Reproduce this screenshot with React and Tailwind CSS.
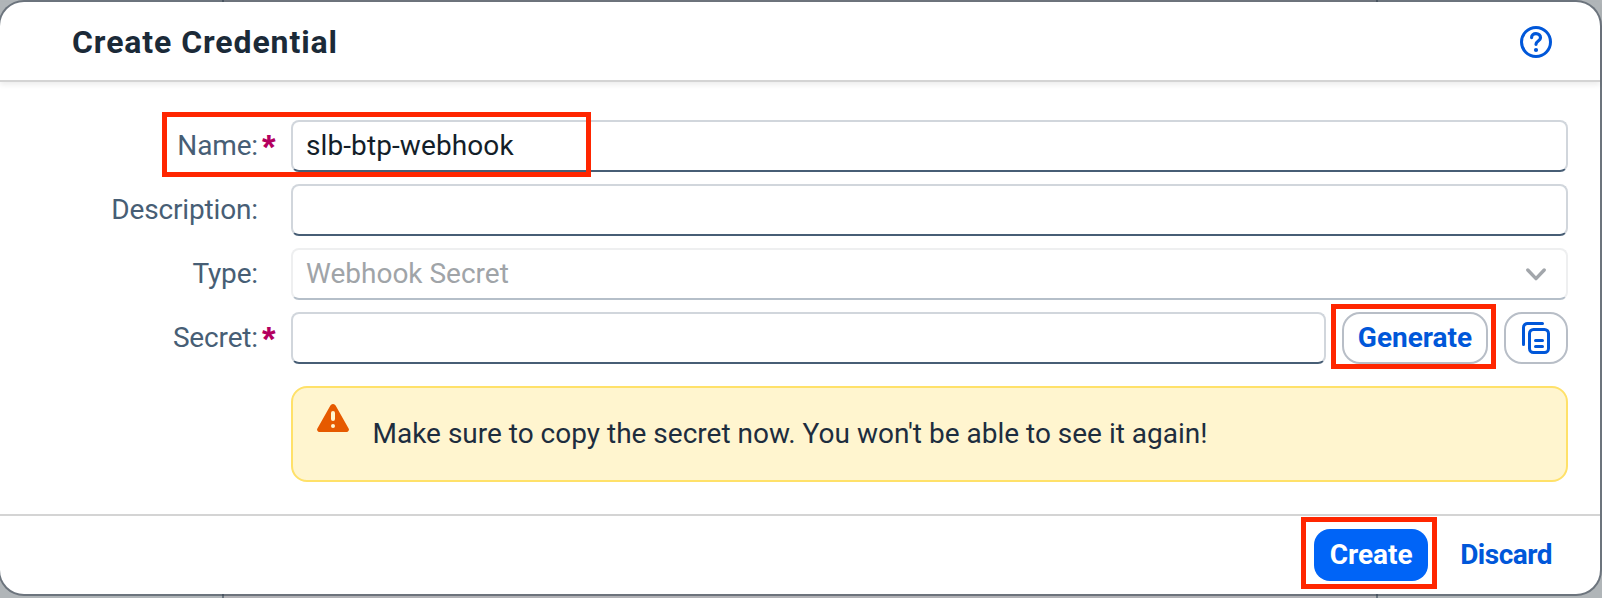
function HelpIcon() {
  return (
    <svg className="h-8 w-8" viewBox="0 0 32 32" fill="none" stroke="#0057d9" strokeLinecap="round" strokeLinejoin="round">
      <circle cx="16" cy="16" r="14.5" strokeWidth="3" />
      <path d="M11.6 11.6C11.6 9 13.5 7.6 16 7.6s4.5 1.6 4.5 4.1c0 3.4-4.5 3.2-4.5 6.6" strokeWidth="3.2" />
      <circle cx="16" cy="24" r="2.1" fill="#0057d9" stroke="none" />
    </svg>
  );
}

function CopyIcon() {
  return (
    <svg className="h-8 w-7" viewBox="0 0 28 32" fill="none" stroke="#0057d9" strokeWidth="3" strokeLinecap="round" strokeLinejoin="round">
      <path d="M1.5 22.5V5.5a4 4 0 0 1 4-4h15" />
      <rect x="7.5" y="7.5" width="19" height="23" rx="4" />
      <path d="M13.5 18.5h7M13.5 24.5h7" />
    </svg>
  );
}

function ChevronIcon() {
  return (
    <svg className="h-[13px] w-5" viewBox="0 0 20 13" fill="none" stroke="#a2a6ab" strokeWidth="3.4" strokeLinecap="round" strokeLinejoin="round">
      <path d="M1.8 2 10 10.6 18.2 2" />
    </svg>
  );
}

function WarningIcon() {
  return (
    <svg className="h-7 w-8" viewBox="0 0 32 28">
      <path d="M13.4 1.5a3 3 0 0 1 5.2 0l13 22.9A2.4 2.4 0 0 1 29.5 28h-27A2.4 2.4 0 0 1 .4 24.4z" fill="#e65a00" />
      <rect x="14" y="7" width="4" height="10" rx="2" fill="#fff5cf" />
      <circle cx="16" cy="22" r="2" fill="#fff5cf" />
    </svg>
  );
}

function Row({ label, required, children }) {
  return (
    <div className="flex h-[52px] items-center">
      <div className="w-[258px] shrink-0 text-right tracking-[-0.15px] text-[#475e75]">{label}:</div>
      <div className="h-[52px] w-[33px] shrink-0 pt-[5px] pl-1 font-['Liberation_Sans',sans-serif] text-[35px] leading-[44px] font-bold text-[#b4005f]">
        {required ? "*" : ""}
      </div>
      {children}
    </div>
  );
}

function Field({ value, disabled, children }) {
  return (
    <div
      className={
        "flex h-[52px] min-w-0 flex-1 items-center justify-between rounded-lg border-2 bg-white px-[13px] " +
        (disabled
          ? "border-[#eeeff0] border-b-[#b5bfc9] text-[#a0a4a8]"
          : "border-[#d1d6dc] border-b-[#475e75] tracking-[0.1px] text-[#131e29]")
      }
    >
      <span>{value}</span>
      {children}
    </div>
  );
}

export default function App() {
  return (
    <div className="relative h-[598px] w-[1602px] overflow-hidden bg-[#b0b5b8] pt-0.5 font-[Roboto,sans-serif] text-[28px] leading-9">
      <div className="absolute inset-0 flex">
        <div className="w-56 border-r-2 border-[#6c7680]" />
        <div className="w-[1154px] border-r-2 border-[#6c7680] bg-[#b2b2b6]" />
      </div>

      <div className="relative flex h-[592px] w-[1600px] flex-col rounded-3xl bg-white shadow-[0_0_0_2px_rgba(40,52,66,0.5)]">
        <header className="flex h-20 shrink-0 items-center justify-between border-b-2 border-[#d4d4d4] pt-[2px] pr-12 pl-[72px] shadow-[0_3px_5px_rgba(0,0,0,0.07)]">
          <h1 className="text-[32px] font-bold tracking-[0.9px] text-[#1b2a38]">Create Credential</h1>
          <HelpIcon />
        </header>

        <main className="flex flex-1 flex-col gap-3 pt-[38px] pr-8">
          <Row label="Name" required>
            <Field value="slb-btp-webhook" />
          </Row>
          <Row label="Description">
            <Field />
          </Row>
          <Row label="Type">
            <Field value="Webhook Secret" disabled>
              <span className="mr-[7px]">
                <ChevronIcon />
              </span>
            </Field>
          </Row>
          <Row label="Secret" required>
            <Field />
            <button className="ml-4 h-[52px] w-[146px] rounded-[18px] border-2 border-[#b8bec7] bg-white font-bold text-[#0057d9]">
              Generate
            </button>
            <button className="ml-4 flex h-[52px] w-16 items-center justify-center rounded-[18px] border-2 border-[#b8bec7] bg-white">
              <CopyIcon />
            </button>
          </Row>
          <div className="mt-[10px] ml-[291px] flex h-24 items-center rounded-2xl border-2 border-[#ffe169] bg-[#fff5cf] pl-6">
            <div className="-mt-8">
              <WarningIcon />
            </div>
            <p className="ml-[23.5px] text-[#1d2d3e]">Make sure to copy the secret now. You won't be able to see it again!</p>
          </div>
        </main>

        <footer className="flex h-20 shrink-0 items-center justify-end border-t-2 border-[#d4d4d4] pr-[49px]">
          <button className="h-[52px] w-[114px] rounded-2xl bg-[#0064f7] font-bold text-white">Create</button>
          <button className="ml-8 -mr-px font-bold tracking-[-0.5px] text-[#0057d9]">Discard</button>
        </footer>
      </div>

      <div className="absolute top-[112px] left-[162px] h-[65px] w-[429px] border-5 border-[#ff2600]" />
      <div className="absolute top-[304px] left-[1331px] h-[65px] w-[165px] border-5 border-[#ff2600]" />
      <div className="absolute top-[517px] left-[1301px] h-[72px] w-[136px] border-5 border-[#ff2600]" />
    </div>
  );
}
